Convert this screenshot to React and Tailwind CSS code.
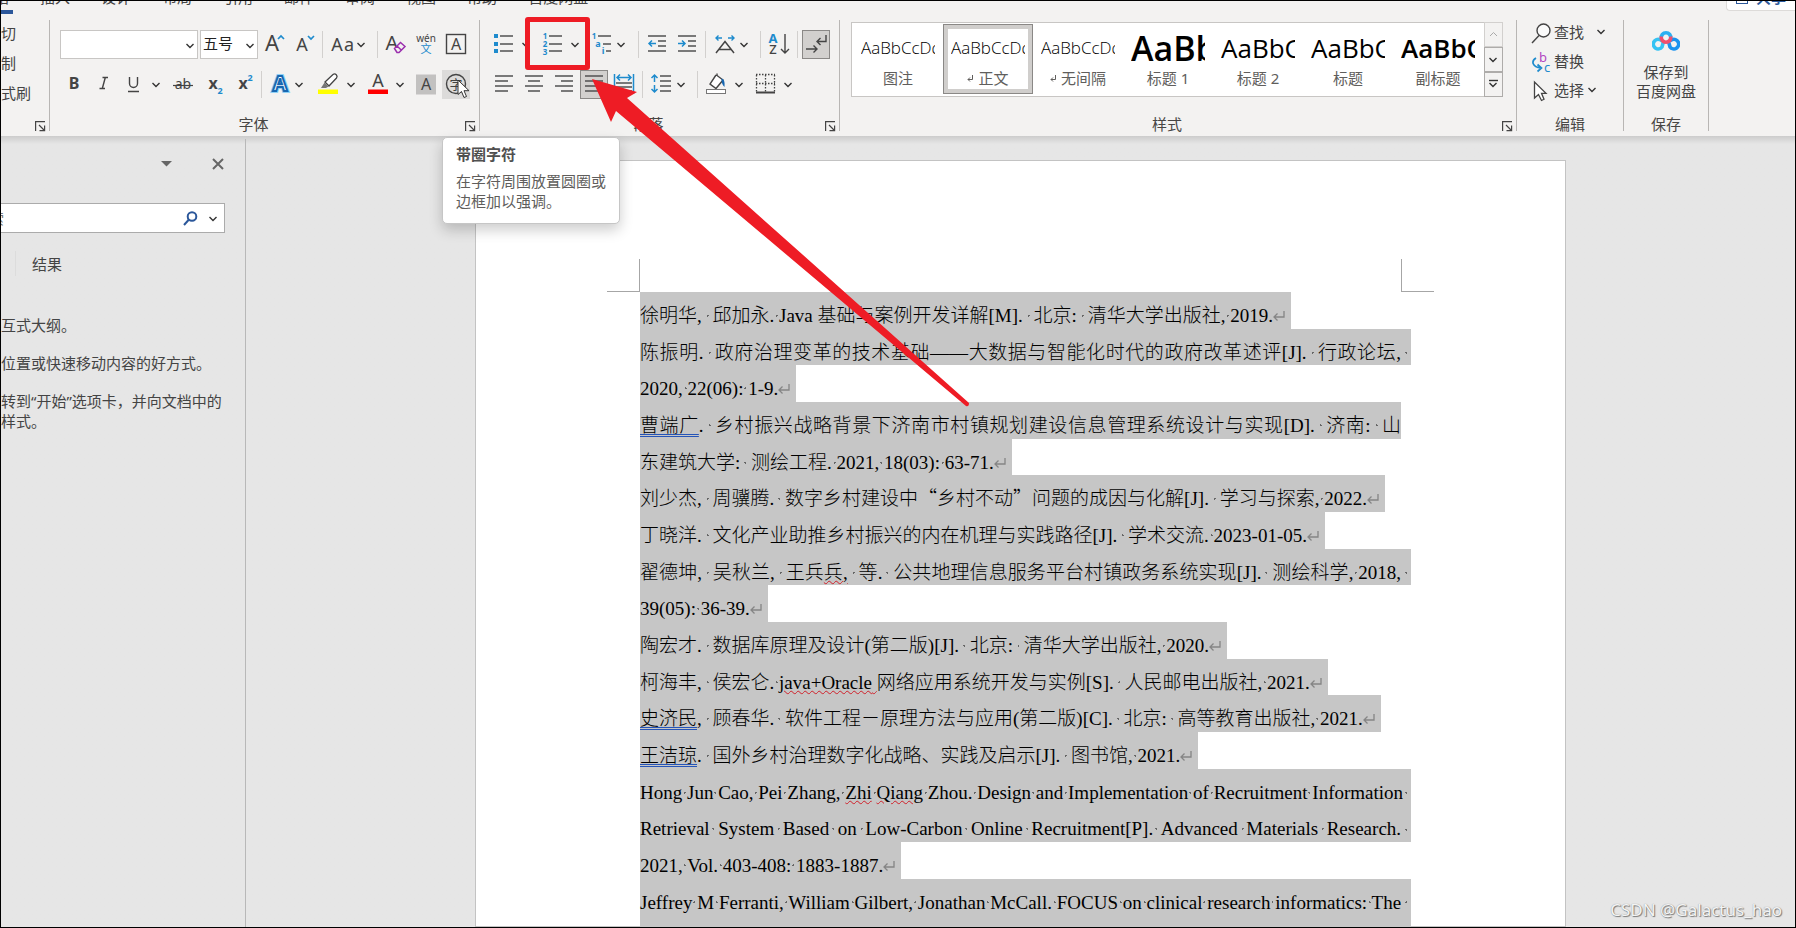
import React from "react";

const UI = "font-['Noto_Sans','Noto_Sans_CJK_SC',sans-serif]";
const DARK = "#444444";
const BLUE = "#1e8bcd";

function Chev({ x, y = 15, c = "#333" }) {
  return <path d={`M${x - 3.5} ${y - 2}l3.500 3.500 3.500-3.500`} fill="none" stroke={c} strokeWidth="1.4" />;
}

function Tool({ label, w, active, hover, children }) {
  const tone = active
    ? "border border-[#8a8886] bg-[#d2d0ce]"
    : hover
      ? "bg-[#dcdbda]"
      : "";
  return (
    <button type="button" aria-label={label} className={`flex h-[29px] shrink-0 items-center justify-center ${tone}`}>
      <svg width={w} height="29" viewBox={`0 0 ${w} 29`} className={active ? "-m-px" : ""} aria-hidden="true">
        {children}
      </svg>
    </button>
  );
}

function Glyph({ x, y, size, fill = DARK, children, ...rest }) {
  return (
    <text x={x} y={y} fontSize={size} fill={fill} textAnchor="middle" fontFamily="'Noto Sans','Noto Sans CJK SC',sans-serif" {...rest}>
      {children}
    </text>
  );
}

function Bar({ className = "mx-[3px]" }) {
  return <div className={`h-[27px] w-px shrink-0 bg-[#d2d0ce] ${className}`} />;
}

function Divider() {
  return <div className="mt-[6px] h-[111px] w-px shrink-0 bg-[#b8b6b4]" />;
}

function Lines({ rows, c = "#505050" }) {
  return rows.map(([x1, x2, y]) => <path key={y} d={`M${x1} ${y}H${x2}`} stroke={c} strokeWidth="1.5" />);
}

function Group({ label, launcher, className, children }) {
  return (
    <section className={`flex h-[122px] shrink-0 flex-col ${className}`}>
      {children}
      <div className="mt-auto flex h-[22px] items-start text-[15px] leading-5 text-[#484644]">
        <span className="flex-1 text-center">{label}</span>
        {launcher && (
          <button type="button" aria-label="更多选项" className="w-[22px] pt-[7px] pl-[8px]">
            <svg width="11" height="11" viewBox="0 0 11 11" fill="none" stroke="#444" strokeWidth="1.2">
              <path d="M.6 10V.6H10M4 4l5 5M9.600 4.500v5.100H4.500" />
            </svg>
          </button>
        )}
      </div>
    </section>
  );
}

const tabs = ["开始", "插入", "设计", "布局", "引用", "邮件", "审阅", "视图", "帮助", "百度网盘"];

function TabRow() {
  return (
    <div className="flex h-[13px] items-start justify-between">
      <nav className="-ml-[22px] flex gap-[31px] text-[15px] text-[#444]">
        {tabs.map((t, i) => (
          <a key={t} href="#" className={`flex h-[13px] items-end whitespace-nowrap ${i === 0 ? "w-[34px] -mr-[4px] border-b-4 border-[#2b579a]" : ""}`}>
            <span className={i === 0 ? "leading-[22px] pb-[2px]" : "leading-[22px] pb-[6px]"}>{t}</span>
          </a>
        ))}
      </nav>
      <button type="button" className="flex h-[10px] w-[69px] items-end gap-2 overflow-hidden rounded-bl border-b border-l border-[#dddbd9] bg-white pl-[9px] text-[15px] font-bold leading-[22px] text-[#2b579a]">
        <span className="mb-[6px] h-5 w-3 border border-[#2b579a]" />
        <span className="mb-[2px]">共享</span>
      </button>
    </div>
  );
}

function ClipboardGroup() {
  return (
    <Group label="" launcher className="w-[48px]">
      <div className="flex flex-col items-start overflow-hidden pt-[4px] text-[15px] leading-[30px] text-[#444]">
        <button type="button">切</button>
        <button type="button">制</button>
        <button type="button">式刷</button>
      </div>
    </Group>
  );
}

function FontGroup() {
  return (
    <Group label="字体" launcher className="w-[429px]">
      <div className="flex items-center pt-[16px] pl-[10px]">
        <label className="flex h-[29px] w-[138px] items-center justify-end border border-[#c8c6c4] bg-white">
          <input aria-label="字体名称" className="w-full min-w-0 flex-1 bg-transparent px-1 outline-none" />
          <svg width="14" height="27"><Chev x={7} y={15} /></svg>
        </label>
        <label className="ml-[2px] mr-px flex h-[29px] w-[58px] items-center border border-[#c8c6c4] bg-white pl-[2px] text-[15px] text-[#222]">
          <input aria-label="字号" defaultValue="五号" className="w-full min-w-0 flex-1 bg-transparent pb-[2px] outline-none" />
          <svg width="14" height="27"><Chev x={7} y={15} /></svg>
        </label>
        <Tool label="增大字号" w={30}>
          <Glyph x={13} y={21} size={22}>A</Glyph>
          <path d="M19 9l3-3 3 3" fill="none" stroke={BLUE} strokeWidth="1.7" />
        </Tool>
        <Tool label="减小字号" w={30}>
          <Glyph x={13} y={21} size={18}>A</Glyph>
          <path d="M19 6l3 3 3-3" fill="none" stroke={BLUE} strokeWidth="1.7" />
        </Tool>
        <Bar />
        <Tool label="更改大小写" w={48}>
          <Glyph x={11} y={21} size={18}>A</Glyph>
          <Glyph x={23} y={21} size={18}>a</Glyph>
          <Chev x={35} />
        </Tool>
        <Bar />
        <Tool label="清除格式" w={30}>
          <Glyph x={11} y={20} size={20}>A</Glyph>
          <path d="M13.500 18.500l6-6 4.500 4-6 6h-2zM16 16l4.500 4.200" fill="#f3f2f1" stroke="#9b2fae" strokeWidth="1.500" />
        </Tool>
        <Tool label="拼音指南" w={30}>
          <Glyph x={15} y={12} size={10}>wén</Glyph>
          <Glyph x={15} y={23} size={11} fill={BLUE}>文</Glyph>
        </Tool>
        <Tool label="字符边框" w={30}>
          <rect x="5.500" y="4.500" width="19" height="19" fill="none" stroke={DARK} strokeWidth="1.4" />
          <Glyph x={15} y={20} size={16}>A</Glyph>
        </Tool>
      </div>
      <div className="flex items-center pt-[11px] pl-[9px]">
        <Tool label="加粗" w={30}><Glyph x={15} y={19} size={16} fontWeight="700">B</Glyph></Tool>
        <Tool label="倾斜" w={30}>
          <path d="M13.500 7.500h5.500M10.500 18.500h5.500M16.300 7.500l-3 11" stroke={DARK} strokeWidth="1.4" fill="none" />
        </Tool>
        <Tool label="下划线" w={49}>
          <path d="M10.500 7v6.500a4 4 0 0 0 8 0V7M9 21.500h11" stroke={DARK} strokeWidth="1.4" fill="none" />
          <Chev x={37} />
        </Tool>
        <Tool label="删除线" w={32}>
          <Glyph x={15} y={19} size={14}>ab</Glyph>
          <path d="M5 15.500h20" stroke={DARK} strokeWidth="1.2" />
        </Tool>
        <Tool label="下标" w={30}>
          <Glyph x={13} y={19} size={16} fontWeight="700">x</Glyph>
          <Glyph x={20} y={24} size={9} fill={BLUE} fontWeight="700">2</Glyph>
        </Tool>
        <Tool label="上标" w={28}>
          <Glyph x={13} y={19} size={16} fontWeight="700">x</Glyph>
          <Glyph x={20} y={11} size={9} fill={BLUE} fontWeight="700">2</Glyph>
        </Tool>
        <Bar />
        <Tool label="文本效果" w={45}>
          <Glyph x={15} y={21} size={21} fill="#fff" fontWeight="700" stroke="#8fd0f5" strokeWidth="4">A</Glyph>
          <Glyph x={15} y={21} size={21} fill="#fff" fontWeight="700" stroke="#1767b0" strokeWidth="2">A</Glyph>
          <Chev x={34} />
        </Tool>
        <Tool label="文本突出显示颜色" w={52}>
          <path d="M15 12l8-7.500a2.500 2.500 0 0 1 3.500 3.500L19 16z" fill="#fff" stroke={DARK} strokeWidth="1.3" />
          <path d="M14.500 12.500l4 4-2.500 1.500h-5z" fill="#777" />
          <path d="M8 19.500h20v4.500H8z" fill="#ffff00" />
          <Chev x={41} />
        </Tool>
        <Tool label="字体颜色" w={50}>
          <Glyph x={16} y={17} size={18}>A</Glyph>
          <path d="M6 19.500h20v4.500H6z" fill="#ff0000" />
          <Chev x={38} />
        </Tool>
        <Tool label="字符底纹" w={30}>
          <path d="M4 4.500h20v20H4z" fill="#c2c1c0" />
          <Glyph x={14} y={20} size={16}>A</Glyph>
        </Tool>
        <div className="relative">
          <Tool label="带圈字符" w={28} hover>
            <circle cx="14" cy="14" r="9.500" fill="none" stroke={DARK} strokeWidth="1.4" />
            <Glyph x={14} y={19} size={13}>字</Glyph>
          </Tool>
          <svg className="absolute left-[15px] top-[9px] z-10" width="14" height="20" viewBox="0 0 14 20">
            <path d="M1 1v14.500l3.500-3 2.500 6 2.500-1-2.500-5.800H12z" fill="#fff" stroke="#333" strokeWidth="1" />
          </svg>
        </div>
      </div>
    </Group>
  );
}

function ParagraphGroup() {
  return (
    <Group label="段落" launcher className="w-[359px]">
      <div className="flex items-center pt-[16px] pl-[9px]">
        <Tool label="项目符号" w={45}>
          <path d="M5 4h4v4H5zM5 12h4v4H5zM5 19h4v4H5z" fill={BLUE} />
          <Lines rows={[[11, 24, 6], [11, 24, 14], [11, 24, 21]]} />
          <Chev x={37} />
        </Tool>
        <Tool label="编号" w={50}>
          <Glyph x={11} y={9} size={8} fill={BLUE} fontWeight="700">1</Glyph>
          <Glyph x={11} y={17} size={8} fill={BLUE} fontWeight="700">2</Glyph>
          <Glyph x={11} y={25} size={8} fill={BLUE} fontWeight="700">3</Glyph>
          <Lines rows={[[15, 28, 6], [15, 28, 14], [15, 28, 21]]} />
          <Chev x={41} />
        </Tool>
        <Tool label="多级列表" w={50}>
          <Glyph x={10} y={9} size={8} fill={BLUE} fontWeight="700">1</Glyph>
          <Glyph x={14} y={17} size={9} fill={BLUE} fontWeight="700">a</Glyph>
          <Glyph x={19} y={24} size={9} fill={BLUE} fontWeight="700">i</Glyph>
          <Lines rows={[[14, 27, 6], [19, 27, 14], [22, 27, 21]]} />
          <Chev x={37} />
        </Tool>
        <Bar className="ml-1 mr-[3px]" />
        <Tool label="减少缩进量" w={30}>
          <Lines rows={[[6, 24, 6], [16, 24, 11], [16, 24, 16], [6, 24, 21]]} />
          <path d="M14 13.500H7M10 10.500l-3 3 3 3" fill="none" stroke={BLUE} strokeWidth="1.5" />
        </Tool>
        <Tool label="增加缩进量" w={30}>
          <Lines rows={[[6, 24, 6], [16, 24, 11], [16, 24, 16], [6, 24, 21]]} />
          <path d="M6 13.500h7M10 10.500l3 3-3 3" fill="none" stroke={BLUE} strokeWidth="1.5" />
        </Tool>
        <Bar />
        <Tool label="中文版式" w={48}>
          <path d="M7 23L16 11.500 25 23M10 19.500h12" fill="none" stroke={DARK} strokeWidth="1.5" />
          <path d="M13 8H7M9.500 5.500L7 8l2.500 2.500M19 8h6M22.500 5.500L25 8l-2.500 2.500" fill="none" stroke={BLUE} strokeWidth="1.4" />
          <Chev x={35} />
        </Tool>
        <Bar />
        <Tool label="排序" w={30}>
          <Glyph x={9} y={13} size={13} fill={BLUE} fontWeight="700">A</Glyph>
          <Glyph x={9} y={24} size={13} fontWeight="500">Z</Glyph>
          <path d="M21 4v19M17 19l4 4 4-4" fill="none" stroke={DARK} strokeWidth="1.4" />
        </Tool>
        <Bar className="ml-[3px] mr-1" />
        <Tool label="显示编辑标记" w={28} active>
          <path d="M24 5v6.500h-9M18.500 8L15 11.500l3.500 3.500M4 19h11M11.500 15.500L15 19l-3.500 3.500" fill="none" stroke={DARK} strokeWidth="1.4" />
        </Tool>
      </div>
      <div className="flex items-center pt-[11px] pl-[9px]">
        <Tool label="左对齐" w={30}><Lines rows={[[6, 24, 6], [6, 19, 11], [6, 24, 16], [6, 19, 21]]} /></Tool>
        <Tool label="居中" w={30}><Lines rows={[[6, 24, 6], [9, 21, 11], [6, 24, 16], [9, 21, 21]]} /></Tool>
        <Tool label="右对齐" w={30}><Lines rows={[[6, 24, 6], [12, 24, 11], [6, 24, 16], [12, 24, 21]]} /></Tool>
        <div className="mx-px">
          <Tool label="两端对齐" w={28} active><Lines rows={[[5, 23, 6], [5, 23, 11], [5, 23, 16], [5, 23, 21]]} /></Tool>
        </div>
        <Tool label="分散对齐" w={30}>
          <path d="M5.500 4v20M24.500 4v20M8 7.500h14M11 4.500l-3 3 3 3M19 4.500l3 3-3 3" fill="none" stroke={BLUE} strokeWidth="1.5" />
          <Lines rows={[[7, 23, 13], [7, 23, 17], [7, 23, 21]]} />
        </Tool>
        <Bar />
        <Tool label="行距" w={48}>
          <path d="M8.500 5v7M8.500 15v7M5.500 8l3-3 3 3M5.500 19l3 3 3-3" fill="none" stroke={BLUE} strokeWidth="1.5" />
          <Lines rows={[[14, 25, 6], [14, 25, 11], [14, 25, 16], [14, 25, 21]]} />
          <Chev x={35} />
        </Tool>
        <Bar />
        <Tool label="底纹" w={50}>
          <path d="M15 5l-6 9 6 4.500 7-8.500-6-4.500V3.500" fill="#fff" stroke={DARK} strokeWidth="1.4" />
          <path d="M20 8.500c3 0 4 3 3.500 8.500-2-2-3-4-3-8" fill="#1767b0" />
          <rect x="5.500" y="19.500" width="19" height="4" fill="#fff" stroke="#777" />
          <Chev x={38} />
        </Tool>
        <Tool label="边框" w={50}>
          <path d="M5.500 5v17M14.500 5v17M23.500 5v17M5 4.500h19M5 13.500h19" fill="none" stroke={DARK} strokeWidth="1.3" strokeDasharray="1.500 1.500" />
          <path d="M5 22.500h19" stroke={DARK} strokeWidth="2" />
          <Chev x={37} />
        </Tool>
      </div>
    </Group>
  );
}

const styles = [
  { name: "图注", sample: "AaBbCcDd", cls: "text-[17px] font-light" },
  { name: "正文", sample: "AaBbCcDd", cls: "text-[17px] font-light", mark: true, on: true },
  { name: "无间隔", sample: "AaBbCcDd", cls: "text-[17px] font-light", mark: true },
  { name: "标题 1", sample: "AaBb", cls: "text-[34px] font-semibold" },
  { name: "标题 2", sample: "AaBbC", cls: "text-[26px] font-normal" },
  { name: "标题", sample: "AaBbC", cls: "text-[26px] font-normal" },
  { name: "副标题", sample: "AaBbC", cls: "text-[26px] font-semibold" },
];

function StylesGroup() {
  return (
    <Group label="样式" launcher className="w-[676px]">
      <div className="ml-[11px] mt-[8px] flex h-[75px] w-[652px] border border-[#c8c6c4] bg-white">
        <div className="flex pl-px pt-px">
          {styles.map((s) => (
            <button key={s.name} type="button" className={`flex h-[70px] w-[90px] flex-col items-center border ${s.on ? "border-[#8a8886] shadow-[inset_0_0_0_4px_#d0cecc]" : "border-transparent"}`}>
              <span className={`mt-[3px] flex h-[40px] w-[74px] items-center overflow-hidden whitespace-nowrap leading-[40px] text-black font-['Open_Sans','Noto_Sans',sans-serif] ${s.cls}`}>{s.sample}</span>
              <span className="flex items-center gap-[5px] text-[15px] leading-5 text-[#605e5c]">
                {s.mark && (
                  <svg width="6" height="7" viewBox="0 0 6 7" fill="none" stroke="#605e5c"><path d="M5.500 0v4.500H1M3 2.500l-2 2 2 2" /></svg>
                )}
                {s.name}
              </span>
            </button>
          ))}
        </div>
        <div className="-my-px -mr-px ml-auto flex w-[19px] flex-col">
          <button type="button" aria-label="上一行" className="flex-1 border border-[#d2d0ce] bg-[#f3f2f1]"><svg width="17" height="23"><path d="M5 13l3.500-3.500L12 13" fill="none" stroke="#aaa" /></svg></button>
          <button type="button" aria-label="下一行" className="flex-1 border border-[#aeacaa] bg-[#f3f2f1]"><svg width="17" height="23"><Chev x={8} y={12} /></svg></button>
          <button type="button" aria-label="其他样式" className="flex-1 border border-[#aeacaa] bg-[#f3f2f1]"><svg width="17" height="23"><path d="M4 7.500h9" stroke="#333" strokeWidth="1.400" /><Chev x={8} y={12} /></svg></button>
        </div>
      </div>
    </Group>
  );
}

function EditGroup() {
  const row = "flex h-[29px] items-center gap-[3px]";
  return (
    <Group label="编辑" className="w-[106px]">
      <div className="flex flex-col pt-[4px] pl-[14px] text-[15px] text-[#444]">
        <button type="button" className={row}>
          <svg width="20" height="22" viewBox="0 0 20 22" fill="none" stroke={DARK} strokeWidth="1.400"><circle cx="12.500" cy="8.500" r="6.500" fill="#fafafa" /><path d="M8 13.500L1 21" /></svg>
          查找
          <svg width="24" height="20"><Chev x={14} y={9} /></svg>
        </button>
        <button type="button" className={row}>
          <svg width="20" height="24" viewBox="0 0 20 24" fill="none">
            <Glyph x={12} y={12} size={13} fill="#b146c2">b</Glyph>
            <Glyph x={16} y={22} size={13} fill={BLUE}>c</Glyph>
            <path d="M5 8c-5 3-4 9 5 10M6.500 14.500l4 3.500-4 3.500" stroke={BLUE} strokeWidth="1.700" />
          </svg>
          替换
        </button>
        <button type="button" className={row}>
          <svg width="20" height="22" viewBox="0 0 20 22"><path d="M3.500 2v16l4-3.500 3 6 2.500-1.200-2.500-6H15z" fill="#fff" stroke={DARK} strokeWidth="1.300" /></svg>
          选择
          <svg width="16" height="20" className="-ml-[3px]"><Chev x={8} y={9} /></svg>
        </button>
      </div>
    </Group>
  );
}

function SaveGroup() {
  return (
    <Group label="保存" className="w-[84px]">
      <button type="button" className="flex flex-col items-center pt-[15px] text-[15px] leading-[19px] text-[#444]">
        <svg width="28" height="24" viewBox="0 0 28 24" fill="none" strokeWidth="3.600">
          <path d="M9.300 9.500a4.800 4.800 0 1 1 9.400 0" stroke="#2bb0f2" />
          <path d="M11.500 12.500L10 18a4.800 4.800 0 1 1-2-7.300c2 .8 3.500 2.300 5 4" stroke="#35c3f3" />
          <path d="M16.500 12.500L18 18a4.800 4.800 0 1 0 2-7.300c-1 .3-1.500.6-2.200 1.300" stroke="#1a93ef" />
          <path d="M9.300 7.500a4.800 4.800 0 1 0 9.400 0" stroke="#f0506e" />
        </svg>
        <span className="pt-[10px]">保存到</span>
        <span>百度网盘</span>
      </button>
    </Group>
  );
}

function Sidebar() {
  return (
    <aside className="mt-[3px] w-[245px] shrink-0 border-r border-[#b8b8b8] text-[15px] leading-5 text-[#444]">
      <div className="flex h-[50px] items-center justify-end gap-[39px] pr-[21px]">
        <button type="button" aria-label="窗格选项"><svg width="12" height="6"><path d="M0 0h11L5.500 5.500z" fill="#666" /></svg></button>
        <button type="button" aria-label="关闭"><svg width="12" height="12" stroke="#666" strokeWidth="2"><path d="M1 1l10 10M11 1L1 11" /></svg></button>
      </div>
      <div className="mt-[14px] mr-[20px] flex h-[30px] items-center gap-[8px] border border-l-0 border-[#ababab] bg-white pr-[4px]">
        <div className="flex w-[3px] justify-end overflow-hidden text-[#777]">索</div>
        <input aria-label="搜索文档" className="min-w-0 flex-1 bg-transparent outline-none" />
        <svg width="15" height="15" viewBox="0 0 15 15" fill="none" stroke="#2b579a" strokeWidth="2"><circle cx="9" cy="5.500" r="4.300" /><path d="M6 8.500L1 14" /></svg>
        <svg width="14" height="14"><Chev x={7} y={8} /></svg>
      </div>
      <div className="mt-[18px] ml-[14px] flex h-[25px] items-center border-l border-[#dcdcdc] pl-[16px]">
        <a href="#">结果</a>
      </div>
      <div className="flex flex-col gap-[18px] whitespace-nowrap pt-[39px]">
        <p>互式大纲。</p>
        <p>位置或快速移动内容的好方式。</p>
        <p>转到“开始”选项卡，并向文档中的<br />样式。</p>
      </div>
    </aside>
  );
}

const G = (t) => ({ kind: "grammar", t });
const S = (t) => ({ kind: "spelling", t });

// " " is a Latin space, "~" an East Asian half-width space, "^" an unmarked gap.
const lines = [
  { parts: ["徐明华,~邱加永. Java^基础与案例开发详解[M].~北京:~清华大学出版社, 2019."], end: true },
  { parts: ["陈振明.~政府治理变革的技术基础——大数据与智能化时代的政府改革述评[J].~行政论坛,"], full: true, trail: true },
  { parts: ["2020, 22(06): 1-9."], end: true },
  { parts: [G("曹端广"), ".~乡村振兴战略背景下济南市村镇规划建设信息管理系统设计与实现[D].~济南:~山"], full: true },
  { parts: ["东建筑大学:~测绘工程. 2021, 18(03): 63-71."], end: true },
  { parts: ["刘少杰,~周骥腾.~数字乡村建设中“乡村不动”问题的成因与化解[J].~学习与探索, 2022."], end: true },
  { parts: ["丁晓洋.~文化产业助推乡村振兴的内在机理与实践路径[J].~学术交流. 2023-01-05."], end: true },
  { parts: ["翟德坤,~吴秋兰,~王兵", S("兵,"), "~等.~公共地理信息服务平台村镇政务系统实现[J].~测绘科学, 2018,"], full: true, trail: true },
  { parts: ["39(05): 36-39."], end: true },
  { parts: ["陶宏才.~数据库原理及设计(第二版)[J].~北京:~清华大学出版社, 2020."], end: true },
  { parts: ["柯海丰,~侯宏仑. ", S("java+Oracle^"), "网络应用系统开发与实例[S].~人民邮电出版社, 2021."], end: true },
  { parts: [G("史济民"), ",~顾春华.~软件工程－原理方法与应用(第二版)[C].~北京:~高等教育出版社, 2021."], end: true },
  { parts: [G("王洁琼"), ".~国外乡村治理数字化战略、实践及启示[J].~图书馆, 2021."], end: true },
  { parts: ["Hong Jun Cao, Pei Zhang, ", S("Zhi"), " ", S("Qiang"), " Zhou. Design and Implementation of Recruitment Information"], full: true, trail: true },
  { parts: ["Retrieval System Based on Low-Carbon Online Recruitment[P]. Advanced Materials Research."], full: true, trail: true },
  { parts: ["2021, Vol. 403-408: 1883-1887."], end: true },
  { parts: ["Jeffrey M Ferranti, William Gilbert, Jonathan McCall. FOCUS on clinical research informatics: The"], full: true, trail: true },
  { parts: [], full: true, trail: true },
];

const dot = "bg-[radial-gradient(circle,#666_1px,transparent_1px)] bg-[length:3px_3px] bg-center bg-no-repeat";

function Run({ text }) {
  return text.split(/([ ~^“”])/).map((s, i) => {
    if (s === " ") return <span key={i} className={dot}> </span>;
    if (s === "~") return <span key={i} className={`px-[3px] ${dot}`}> </span>;
    if (s === "^") return " ";
    if (s === "“" || s === "”") return <span key={i} className="leading-none font-['Noto_Sans_CJK_SC',sans-serif]">{s}</span>;
    return s;
  });
}

function Line({ line }) {
  return (
    <div className="flex min-w-0 text-[19px] leading-7 font-light whitespace-nowrap text-black">
      <div className={`relative z-10 bg-[#c6c6c6] pt-[10px] ${line.full ? "w-full min-w-0 [text-align-last:justify]" : "flex items-baseline"}`}>
        <span>
          {line.parts.map((p, i) =>
            typeof p === "string" ? (
              <Run key={i} text={p} />
            ) : (
              <span
                key={i}
                className={
                  p.kind === "grammar"
                    ? "underline decoration-[#2554b8] decoration-double decoration-1 underline-offset-2"
                    : "underline decoration-[#d0202a] decoration-wavy decoration-1 underline-offset-1"
                }
              >
                <Run text={p.t} />
              </span>
            ),
          )}
        </span>
        {line.end && (
          <svg className="mr-[6px]" width="12" height="11" viewBox="0 0 12 11" fill="none" stroke="#858585" strokeWidth="1.300">
            <path d="M11 0v6H1M4.500 2.500L1 6l3.500 3.500" />
          </svg>
        )}
      </div>
      {line.trail && <span className="-mr-[10px] w-[10px] shrink-0 bg-[#c6c6c6] pt-[10px]"><span className={`block h-7 ${dot}`} /></span>}
    </div>
  );
}

function Page() {
  return (
    <article className="mt-[24px] w-[1091px] shrink-0 border border-[#c3c3c3] bg-white px-[164px] pt-[98px]">
      <div className="-mx-[33px] flex justify-between">
        <div className="size-[33px] border-r border-b border-[#a6a6a6]" />
        <div className="size-[33px] border-b border-l border-[#a6a6a6]" />
      </div>
      <div className="isolate grid h-[660px] auto-rows-[minmax(0,1fr)] grid-cols-1 font-['Liberation_Serif','Noto_Sans_CJK_SC',serif]">
        {lines.map((l, i) => <Line key={i} line={l} />)}
      </div>
    </article>
  );
}

export default function App() {
  return (
    <div className={`relative flex h-screen flex-col overflow-hidden border border-black bg-[#e6e6e6] ${UI}`}>
      <header className="h-[135px] shrink-0 overflow-hidden bg-[#f3f2f1]">
        <TabRow />
        <div className="flex">
          <ClipboardGroup />
          <Divider />
          <FontGroup />
          <Divider />
          <ParagraphGroup />
          <Divider />
          <StylesGroup />
          <Divider />
          <EditGroup />
          <Divider />
          <SaveGroup />
          <Divider />
        </div>
      </header>
      <div className="flex min-h-0 flex-1 overflow-hidden bg-linear-to-b from-[#cccccc] to-[#e6e6e6] to-[8px]">
        <Sidebar />
        <main className="flex min-w-0 flex-1 justify-center">
          <Page />
        </main>
      </div>

      <div role="tooltip" className="absolute left-[441px] top-[136px] w-[178px] rounded-[5px] border border-[#c6c6c6] bg-white pt-[6px] pr-[11px] pb-[12px] pl-[13px] text-[15px] leading-5 text-[#605e5c] shadow-[0_6px_14px_rgba(0,0,0,0.2)]">
        <p className="font-bold text-[#505050]">带圈字符</p>
        <p className="pt-[7px]">在字符周围放置圆圈或边框加以强调。</p>
      </div>
      <div className="absolute left-[524px] top-[16px] h-[53px] w-[65px] rounded-[3px] border-5 border-[#ee1c25]" />
      <svg className="absolute left-[589px] top-[76px]" width="384" height="334" viewBox="590 77 384 334" aria-hidden="true">
        <path d="M592 79L637 92 627 98 969 403Q969 407 966 406L616 111 611 122z" fill="#ee1c25" />
      </svg>
      <p className="absolute bottom-[5px] right-[13px] text-[17px] leading-6 text-[#f4f4f4] [text-shadow:1px_1px_1px_#777,0_0_1px_#888]">CSDN @Galactus_hao</p>
    </div>
  );
}
